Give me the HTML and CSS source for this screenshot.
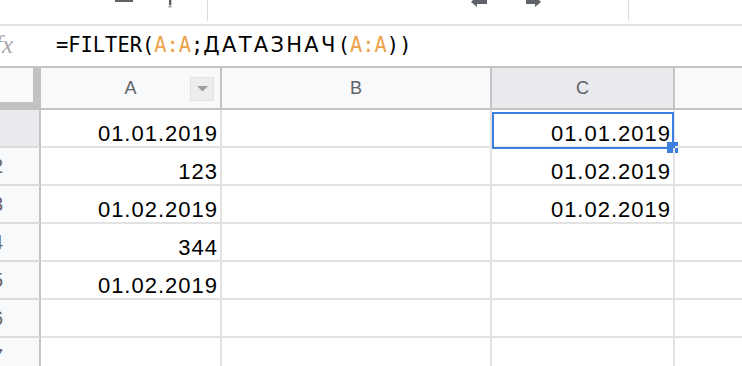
FILE: index.html
```html
<!DOCTYPE html>
<html lang="ru">
<head>
<meta charset="utf-8">
<title>Sheets FILTER</title>
<link rel="stylesheet" href="styles.css">
</head>
<body>
<div class="toolbar">
  <span class="tb-bar"></span>
  <svg class="tb-mark" width="6" height="8" viewBox="0 0 6 8"><rect x="2" y="0" width="2.4" height="5" fill="#5f6368"/><rect x="1.5" y="5.5" width="3" height="2" fill="#9aa0a6"/></svg>
  <span class="tb-divider first"></span>
  <svg class="tb-arrow left" width="16" height="7" viewBox="0 0 16 7"><path d="M0 2 L6 -4 L6 0 L16 0 L16 4 L6 4 L6 7 Z" fill="#5f6368"/></svg>
  <svg class="tb-arrow right" width="15" height="7" viewBox="0 0 15 7"><path d="M15 2 L9 -4 L9 0 L0 0 L0 4 L9 4 L9 7 Z" fill="#5f6368"/></svg>
  <span class="tb-divider second"></span>
</div>
<div class="formula">
  <div class="fx"><span class="fx-glyph">fx</span></div>
  <div class="formula-text"><span class="mono">=FILTER(</span><span class="mono ref">A:A</span><span class="mono">;</span><span class="cyr">ДАТАЗНАЧ</span><span class="mono">(</span><span class="mono ref">A:A</span><span class="mono">))</span></div>
</div>
<div class="grid">
  <div class="corner"></div>
  <div class="colhead col-a">A<span class="filter-btn"><svg width="11" height="6" viewBox="0 0 11 6"><path d="M0 0 H11 L5.5 5.5 Z" fill="#9e9e9e"/></svg></span></div>
  <div class="colhead">B</div>
  <div class="colhead active">C</div>
  <div class="colhead last"></div>

  <div class="rowhead active"><span class="num">1</span></div>
  <div class="cell">01.01.2019</div>
  <div class="cell"></div>
  <div class="cell selected">01.01.2019<span class="sel-box"></span><span class="fill-handle"></span></div>
  <div class="cell last"></div>

  <div class="rowhead"><span class="num">2</span></div>
  <div class="cell">123</div>
  <div class="cell"></div>
  <div class="cell">01.02.2019</div>
  <div class="cell last"></div>

  <div class="rowhead"><span class="num">3</span></div>
  <div class="cell">01.02.2019</div>
  <div class="cell"></div>
  <div class="cell">01.02.2019</div>
  <div class="cell last"></div>

  <div class="rowhead"><span class="num">4</span></div>
  <div class="cell">344</div>
  <div class="cell"></div>
  <div class="cell"></div>
  <div class="cell last"></div>

  <div class="rowhead"><span class="num">5</span></div>
  <div class="cell">01.02.2019</div>
  <div class="cell"></div>
  <div class="cell"></div>
  <div class="cell last"></div>

  <div class="rowhead"><span class="num">6</span></div>
  <div class="cell"></div>
  <div class="cell"></div>
  <div class="cell"></div>
  <div class="cell last"></div>

  <div class="rowhead"><span class="num">7</span></div>
  <div class="cell"></div>
  <div class="cell"></div>
  <div class="cell"></div>
  <div class="cell last"></div>
</div>
</body>
</html>
```
FILE: styles.css
```css
* { box-sizing: border-box; }
html, body {
  margin: 0;
  padding: 0;
  background: #fff;
}
body {
  width: 742px;
  height: 366px;
  overflow: hidden;
  font-family: "Liberation Sans", Arial, sans-serif;
  color: #000;
}

/* toolbar (cut at the top) */
.toolbar {
  height: 26px;
  border-bottom: 2px solid #e1e1e1;
  display: flex;
  align-items: flex-start;
}
.tb-bar {
  margin-left: 115px;
  width: 18px;
  height: 2px;
  background: #5f6368;
}
.tb-mark { margin-left: 34px; display: block; }
.tb-divider {
  width: 1px;
  height: 21px;
  background: #dadce0;
}
.tb-divider.first { margin-left: 34px; }
.tb-arrow { display: block; }
.tb-arrow.left { margin-left: 263px; }
.tb-arrow.right { margin-left: 39px; }
.tb-divider.second { margin-left: 87px; }

/* formula bar */
.formula {
  height: 40px;
  display: flex;
  align-items: center;
  white-space: nowrap;
}
.fx {
  width: 56px;
  flex: none;
  overflow: hidden;
  height: 40px;
  display: flex;
  align-items: center;
}
.fx-glyph {
  margin-left: -5px;
  font-family: "Liberation Serif", serif;
  font-style: italic;
  font-size: 25px;
  color: #a8a8a8;
  margin-top: -2px;
}
.formula-text {
  font-size: 20.4px;
  line-height: 24px;
  margin-top: -2px;
}
.mono {
  font-family: "DejaVu Sans Mono", "Liberation Mono", monospace;
  font-size: 20.4px;
}
.cyr {
  font-family: "DejaVu Sans", "Liberation Sans", sans-serif;
  font-size: 21px;
  letter-spacing: 2.3px;
}
.ref { color: #eda24a; }

/* grid */
.grid {
  display: grid;
  grid-template-columns: 41px 181px 270px 183px 1fr;
  grid-template-rows: 42px repeat(7, 38px);
  border-top: 2px solid #c4c4c4;
}
.corner {
  background: #f8f9fa;
  border-right: 8px solid #c2c2c2;
  border-bottom: 8px solid #c2c2c2;
}
.colhead {
  position: relative;
  background: #f8f9fa;
  border-right: 2px solid #c4c4c4;
  border-bottom: 2px solid #c4c4c4;
  display: flex;
  align-items: center;
  justify-content: center;
  font-size: 18px;
  color: #5f6368;
}
.colhead.active { background: #e8eaed; }
.colhead.last { border-right: none; }
.filter-btn {
  position: absolute;
  right: 6px;
  top: 9px;
  width: 24px;
  height: 24px;
  background: #ededed;
  border: 1px solid #e2e2e2;
  display: flex;
  align-items: center;
  justify-content: center;
}
.filter-btn svg { display: block; }

.rowhead {
  background: #f8f9fa;
  border-right: 2px solid #c4c4c4;
  border-bottom: 2px solid #dcdcdc;
  overflow: hidden;
  display: flex;
  align-items: center;
  font-size: 20px;
  color: #666;
}
.rowhead.active { background: #e8eaed; }
.num {
  flex: none;
  width: 83px;
  margin-left: -44px;
  text-align: center;
}
.rowhead.active .num { margin-left: -48px; }

.cell {
  position: relative;
  border-right: 2px solid #e2e2e2;
  border-bottom: 2px solid #e2e2e2;
  display: flex;
  align-items: flex-end;
  justify-content: flex-end;
  padding: 0 2px 1px 0;
  font-size: 22px;
  line-height: 22px;
  letter-spacing: 1px;
}
.cell.last { border-right: none; }
.sel-box {
  position: absolute;
  left: 0;
  top: 2px;
  width: 182px;
  height: 37px;
  border: 2px solid #3d7ee0;
}
.fill-handle {
  position: absolute;
  left: 175px;
  top: 32px;
  width: 11px;
  height: 11px;
  background: #3d7ee0;
}
```
